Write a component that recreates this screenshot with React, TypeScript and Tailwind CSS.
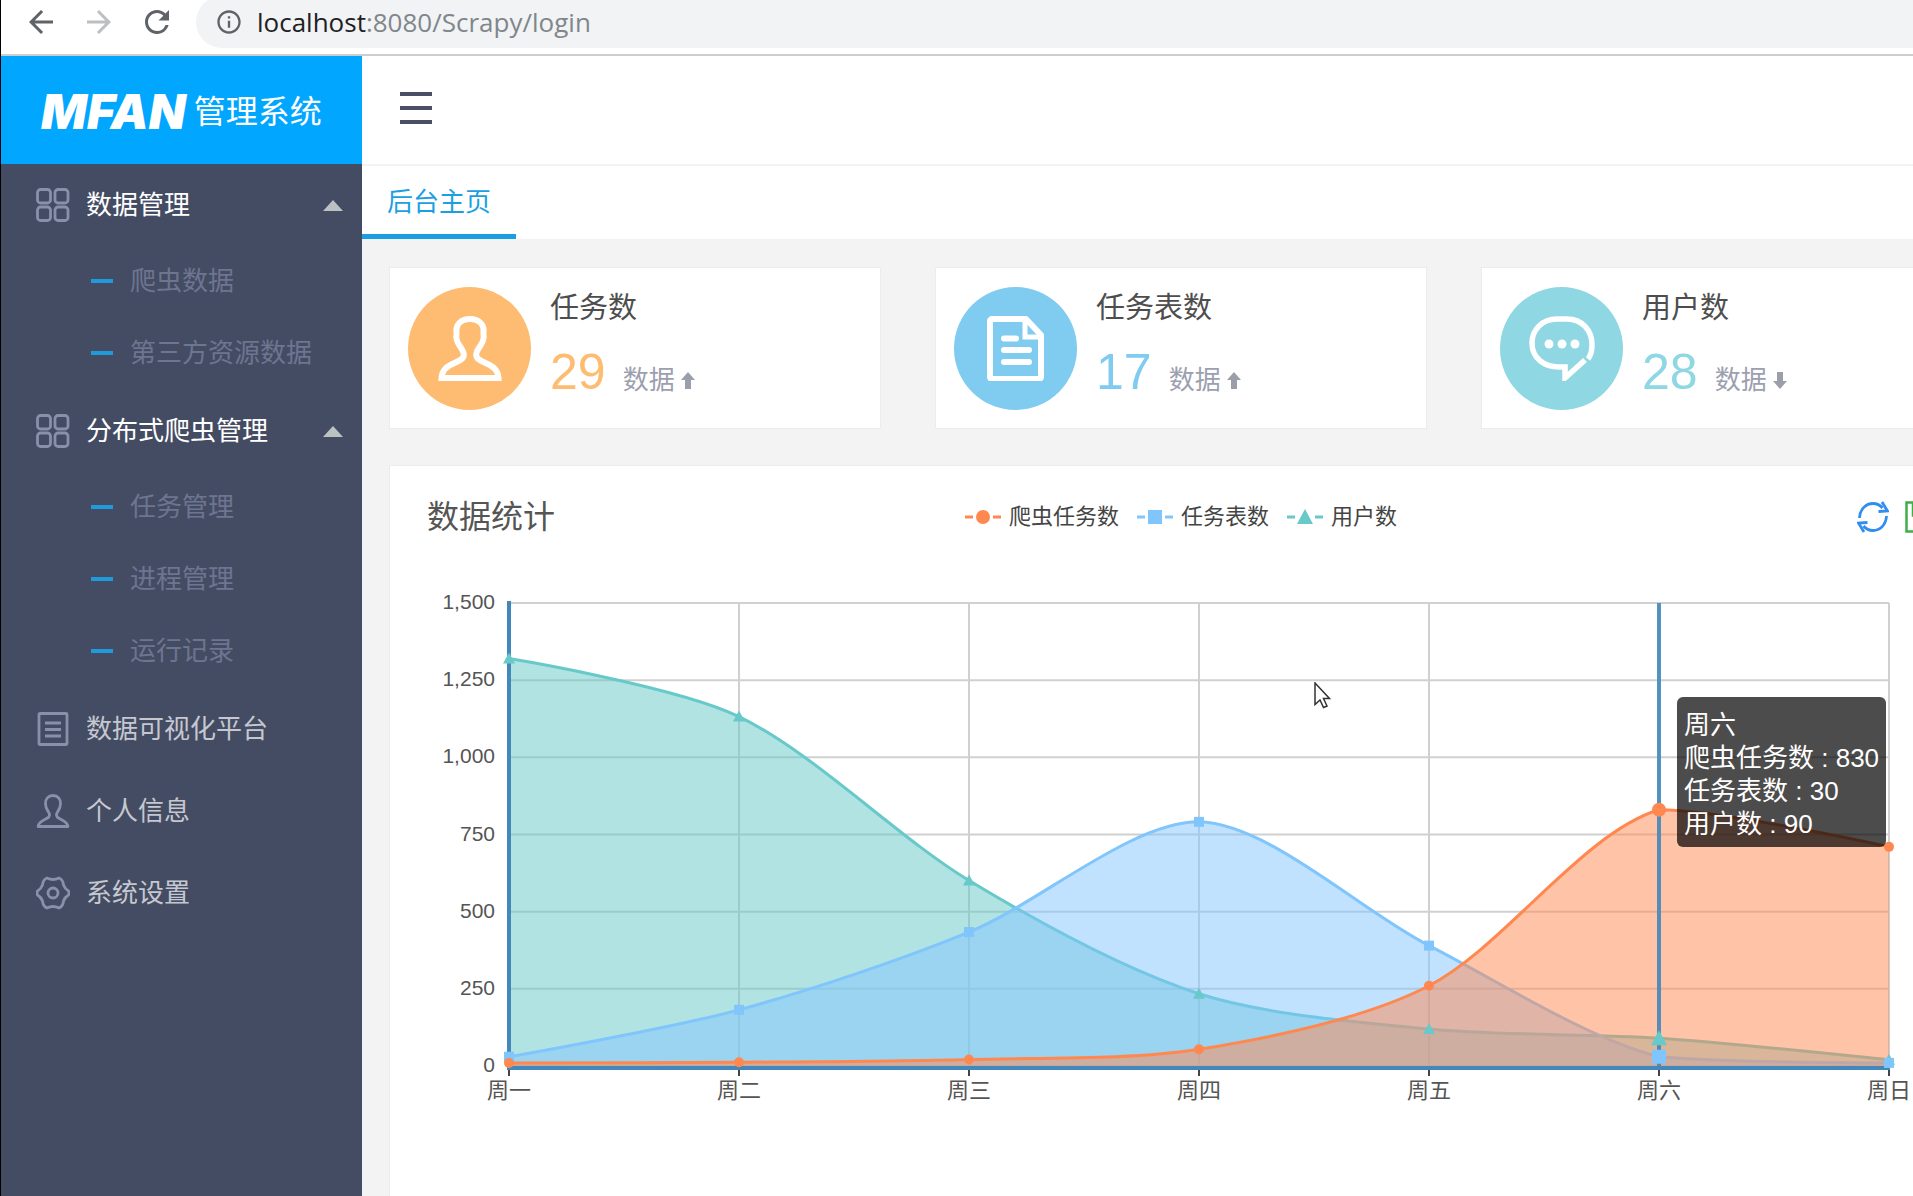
import { MdArrowBack, MdArrowForward, MdInfoOutline, MdRefresh } from "react-icons/md";

const days = ["周一", "周二", "周三", "周四", "周五", "周六", "周日"];

const series = [
  { name: "用户数", color: "#67c9c9", fill: "#66c7c7", shape: "triangle", data: [1320, 1132, 601, 234, 120, 90, 20] },
  { name: "任务表数", color: "#80c5fb", fill: "#82c5ff", shape: "square", data: [30, 182, 434, 791, 390, 30, 10] },
  { name: "爬虫任务数", color: "#ff8850", fill: "#ff8850", shape: "circle", data: [10, 12, 21, 54, 260, 830, 710] },
];

const menu = [
  { label: "数据管理", icon: "grid", children: ["爬虫数据", "第三方资源数据"] },
  { label: "分布式爬虫管理", icon: "grid", children: ["任务管理", "进程管理", "运行记录"] },
  { label: "数据可视化平台", icon: "list", children: [] },
  { label: "个人信息", icon: "user", children: [] },
  { label: "系统设置", icon: "gear", children: [] },
];

const stats = [
  { title: "任务数", value: 29, up: true, icon: "user", bg: "bg-[#fdbc71]", text: "text-[#fdbc71]" },
  { title: "任务表数", value: 17, up: true, icon: "file", bg: "bg-[#80cbf0]", text: "text-[#80cbf0]" },
  { title: "用户数", value: 28, up: false, icon: "chat", bg: "bg-[#8fd7e3]", text: "text-[#8fd7e3]" },
];

function MenuIcon({ name }: { name: string }) {
  return (
    <svg viewBox="0 0 34 34" className="size-[34px] shrink-0" fill="none" stroke="#8890aa" strokeWidth="2.8" strokeLinejoin="round">
      {name === "grid" && (
        <>
          <rect x="1.5" y="1.5" width="13" height="13.5" rx="3" />
          <rect x="19" y="1.5" width="13" height="13.5" rx="3" />
          <rect x="1.5" y="19" width="13" height="13.5" rx="3" />
          <rect x="19" y="19" width="13" height="13.5" rx="3" />
        </>
      )}
      {name === "list" && (
        <>
          <rect x="3" y="1.5" width="28" height="31" rx="1" />
          <path d="M9 11h16M9 17.500h16M9 24h16" />
        </>
      )}
      {name === "user" && (
        <path d="M17 1.500c-5 0-7.500 3.500-7.500 8 0 4.500 1.500 6 3 8.500 1.500 2.500 1.500 4.500-1 6-3.500 2-9 3.500-9.500 8.500h30c-.5-5-6-6.500-9.500-8.500-2.500-1.500-2.500-3.500-1-6 1.500-2.500 3-4 3-8.500 0-4.500-2.500-8-7.500-8z" />
      )}
      {name === "gear" && (
        <>
          <path d="M11 2Q17 5 23 2Q27 3.500 27.500 9Q29 13 32.500 15Q33.500 17 32.500 19Q29 21 27.500 25Q27 30.500 23 32Q17 29 11 32Q7 30.500 6.500 25Q5 21 1.500 19Q.5 17 1.500 15Q5 13 6.500 9Q7 3.500 11 2z" />
          <circle cx="17" cy="17" r="5" />
        </>
      )}
    </svg>
  );
}

function StatIcon({ name }: { name: string }) {
  return (
    <svg viewBox="0 0 66 66" className="size-[66px]" fill="none" stroke="#fff" strokeWidth="6">
      {name === "user" && (
        <path d="M33 4c-9.500 0-14.500 6-13.500 14 .3 2-.7 3 0 5.500.5 4 1.500 5 4 8.500 3.500 5 5 9.500.5 12.500C17 49.500 5 50.500 4.500 63h57C61 50.500 49 49.500 42 44.500c-4.500-3-3-7.500.5-12.500 2.500-3.500 3.500-4.500 4-8.500.7-2.500-.3-3.500 0-5.500C47.500 10 42.500 4 33 4z" />
      )}
      {name === "file" && (
        <>
          <path d="M9 4h34l15 16v42a2 2 0 0 1-2 2H9a2 2 0 0 1-2-2V6a2 2 0 0 1 2-2z" strokeLinejoin="round" />
          <path d="M42 5v17h14" strokeWidth="5" />
          <path d="M21 23.500h12M21 35h25M21 47h25" strokeLinecap="round" />
        </>
      )}
      {name === "chat" && (
        <>
          <path d="M59 44c3-4 4-9 4-14C63 15 53 4 38 4H28C13 4 3 15 3 28c0 15 12 24 27 24h6v11l20-18" strokeWidth="5.500" />
          <g fill="#fff" stroke="none">
            <circle cx="20" cy="29" r="4.500" />
            <circle cx="33" cy="29" r="4.500" />
            <circle cx="46" cy="29" r="4.500" />
          </g>
        </>
      )}
    </svg>
  );
}

function Marker({ shape, color, x, y, r }: { shape: string; color: string; x: number; y: number; r: number }) {
  if (shape === "circle") return <circle cx={x} cy={y} r={r} fill={color} />;
  if (shape === "square") return <rect x={x - r} y={y - r} width={r * 2} height={r * 2} fill={color} />;
  return <path d={`M${x} ${y - r - 1}L${x + r + 1} ${y + r}H${x - r - 1}z`} fill={color} />;
}

// plot area inside the chart svg
const LEFT = 119;
const TOP = 44;
const BOTTOM = 507;
const STEP = 230;
const RIGHT = LEFT + STEP * 6;

const px = (i: number) => LEFT + i * STEP;
const py = (v: number) => BOTTOM - (v / 1500) * (BOTTOM - TOP);

// bezier through every point, control points clamped to the data range
function smoothPath(data: number[]) {
  const smooth = 0.3;
  const pts = data.map((v, i) => [px(i), py(v)]);
  const lo = Math.min(...pts.map((p) => p[1]));
  const hi = Math.max(...pts.map((p) => p[1]));
  const clamp = (y: number) => Math.max(lo, Math.min(hi, y));
  const ctrl = pts.map((p, i) => {
    if (i === 0 || i === pts.length - 1) return [p, p];
    const a = pts[i - 1];
    const b = pts[i + 1];
    const d0 = Math.hypot(p[0] - a[0], p[1] - a[1]);
    const d1 = Math.hypot(p[0] - b[0], p[1] - b[1]);
    const vx = (b[0] - a[0]) * smooth;
    const vy = (b[1] - a[1]) * smooth;
    const k0 = d0 / (d0 + d1);
    const k1 = d1 / (d0 + d1);
    return [
      [p[0] - vx * k0, clamp(p[1] - vy * k0)],
      [p[0] + vx * k1, clamp(p[1] + vy * k1)],
    ];
  });
  let d = `M${pts[0][0]} ${pts[0][1]}`;
  for (let i = 1; i < pts.length; i++) {
    d += `C${ctrl[i - 1][1].join(" ")} ${ctrl[i][0].join(" ")} ${pts[i].join(" ")}`;
  }
  return d;
}

function Chart() {
  return (
    <svg width="1580" height="560" viewBox="0 0 1580 560" className="block" role="img" aria-label="数据统计">
      <g stroke="#d0d0d0" strokeWidth="2">
        {[0, 250, 500, 750, 1000, 1250, 1500].map((v) => (
          <line key={v} x1={LEFT} x2={RIGHT} y1={py(v)} y2={py(v)} />
        ))}
        {days.map((d, i) => (
          <line key={d} x1={px(i)} x2={px(i)} y1={TOP} y2={BOTTOM} />
        ))}
      </g>
      {series.map((s) => (
        <g key={s.name}>
          <path d={`${smoothPath(s.data)}V${BOTTOM}H${LEFT}z`} fill={s.fill} fillOpacity="0.5" />
          <path d={smoothPath(s.data)} fill="none" stroke={s.color} strokeWidth="3" />
        </g>
      ))}
      <path d={`M${LEFT} ${TOP - 2}V${BOTTOM + 1}`} stroke="#4488bb" strokeWidth="4" />
      <path d={`M${px(5)} ${TOP}V${BOTTOM}`} stroke="#4488bb" strokeWidth="4" strokeOpacity="0.9" />
      <path d={`M${LEFT - 2} ${BOTTOM + 2}H${RIGHT + 1}`} stroke="#4488bb" strokeWidth="4" />
      {series.map((s) => (
        <g key={s.name}>
          {s.data.map((v, i) => (
            <Marker key={i} shape={s.shape} color={s.color} x={px(i)} y={py(v)} r={i === 5 ? 7 : 5} />
          ))}
        </g>
      ))}
      <g fill="#555" fontSize="21" textAnchor="end">
        {[0, 250, 500, 750, 1000, 1250, 1500].map((v) => (
          <text key={v} x={LEFT - 14} y={py(v) + 6}>
            {v.toLocaleString("en-US")}
          </text>
        ))}
      </g>
      <g fill="#555" fontSize="22" textAnchor="middle">
        {days.map((d, i) => (
          <g key={d}>
            <path d={`M${px(i)} ${BOTTOM + 4}v6`} stroke="#444" strokeWidth="2" />
            <text x={px(i)} y={BOTTOM + 32}>
              {d}
            </text>
          </g>
        ))}
      </g>
    </svg>
  );
}

function Sidebar() {
  return (
    <aside className="w-[361px] shrink-0 bg-[#444c63]">
      <a href="#" className="flex h-[108px] items-center gap-2 bg-[#01a6ff] pt-1 pl-10 text-white">
        <span className="font-[Inter,sans-serif] text-[48px] leading-none font-black italic">MFAN</span>
        <span className="text-[32px] leading-none">管理系统</span>
      </a>
      <nav>
        {menu.map((item) => (
          <div key={item.label}>
            {item.children.length > 0 ? (
              <button className="flex h-[82px] w-full items-center gap-4 pr-[19px] pl-[35px] text-[26px] text-white">
                <MenuIcon name={item.icon} />
                {item.label}
                <svg viewBox="0 0 20 11" className="ml-auto h-[11px] w-5" fill="#bcc2c4">
                  <path d="M10 0L20 11H0z" />
                </svg>
              </button>
            ) : (
              <a href="#" className="flex h-[82px] items-center gap-4 pl-[35px] text-[26px] text-[#c5c8d0]">
                <MenuIcon name={item.icon} />
                {item.label}
              </a>
            )}
            {item.children.map((child) => (
              <a key={child} href="#" className="flex h-[72px] items-center gap-[17px] pb-0.5 pl-[90px] text-[26px] text-[#6d7590]">
                <span className="h-1 w-[22px] bg-[#1f9bdb]" />
                {child}
              </a>
            ))}
          </div>
        ))}
      </nav>
    </aside>
  );
}

export default function App() {
  return (
    <div className="flex h-screen flex-col overflow-hidden border-l border-black bg-white font-['Liberation_Sans','Noto_Sans_CJK_SC',sans-serif]">
      <div className="flex h-14 shrink-0 items-start border-b-2 border-[#cdcdcd] pl-[22px]">
        <div className="flex h-11 items-center gap-[22px] text-[#5f6368]">
          <button aria-label="后退">
            <MdArrowBack size={36} />
          </button>
          <button aria-label="前进" className="text-[#bdbfc1]">
            <MdArrowForward size={36} />
          </button>
          <button aria-label="刷新页面">
            <MdRefresh size={36} />
          </button>
        </div>
        <div className="-mt-1 ml-[21px] flex h-[52px] flex-1 items-center gap-3.5 rounded-l-full bg-[#f1f3f4] pl-[19px] font-['Open_Sans',sans-serif] text-[26px] text-[#80868b]">
          <MdInfoOutline size={28} className="text-[#5f6368]" />
          <span>
            <span className="text-[#202124]">localhost</span>:8080/Scrapy/login
          </span>
        </div>
      </div>

      <div className="flex min-h-0 flex-1">
        <Sidebar />
        <main className="flex min-w-0 flex-1 flex-col overflow-hidden bg-[#f3f3f3]">
          <header className="flex h-[110px] shrink-0 items-center border-b-2 border-[#f3f3f3] bg-white pb-1 pl-[38px]">
            <button aria-label="菜单" className="flex flex-col gap-2.5">
              <span className="h-1 w-8 bg-[#4b4f66]" />
              <span className="h-1 w-8 bg-[#4b4f66]" />
              <span className="h-1 w-8 bg-[#4b4f66]" />
            </button>
          </header>
          <div className="flex h-[73px] shrink-0 bg-white">
            <a href="#" className="flex items-center border-b-[5px] border-[#1b9fe2] px-[25px] pt-1 text-[26px] text-[#1b9fe2]">
              后台主页
            </a>
          </div>

          <div className="flex min-w-[1610px] flex-1 flex-col pt-[28px] pl-[27px]">
            <div className="grid w-[1584px] grid-cols-3 gap-[54px]">
              {stats.map((s) => (
                <section key={s.title} className="flex h-[162px] items-center gap-[19px] border border-[#ececec] bg-white pl-[18px]">
                  <div className={`flex size-[123px] items-center justify-center rounded-full ${s.bg}`}>
                    <StatIcon name={s.icon} />
                  </div>
                  <div className="pt-1.5">
                    <h3 className="text-[29px] leading-[44px] text-[#4d4d4d]">{s.title}</h3>
                    <p className="mt-1.5 flex items-baseline gap-[17px] leading-[72px]">
                      <span className={`text-[50px] ${s.text}`}>{s.value}</span>
                      <span className="flex items-center gap-1.5 text-[26px] text-[#9c9faf]">
                        数据
                        <svg viewBox="0 0 14 17" className={`h-[17px] w-3.5 ${s.up ? "" : "rotate-180"}`} fill="#9b9fa9">
                          <path d="M7 0L14 8H10V17H4V8H0z" />
                        </svg>
                      </span>
                    </p>
                  </div>
                </section>
              ))}
            </div>

            <section className="relative mt-9 w-[1584px] flex-1 border border-b-0 border-[#ececec] bg-white">
              <div className="grid h-[93px] grid-cols-[1fr_auto_1fr] items-center pt-2 pr-[37px] pl-[37px]">
                <h2 className="text-[32px] text-[#555]">数据统计</h2>
                <ul className="flex gap-[18px] text-[22px] text-[#444]">
                  {[...series].reverse().map((s) => (
                    <li key={s.name} className="flex items-center gap-2">
                      <svg viewBox="0 0 36 18" className="h-[18px] w-9">
                        <path d="M0 9h8M28 9h8" stroke={s.color} strokeWidth="3" />
                        <Marker shape={s.shape} color={s.color} x={18} y={9} r={7} />
                      </svg>
                      {s.name}
                    </li>
                  ))}
                </ul>
                <div className="flex justify-end gap-4">
                  <button aria-label="刷新">
                    <svg viewBox="0 0 32 32" className="size-8" fill="none" stroke="#2f8ef0" strokeWidth="2.8">
                      <path d="M2.500 17C3 8 9 2.500 16 2.500c4 0 7 1.500 9.500 4.500M29.500 15C29 24 23 29.500 16 29.500c-4 0-7-1.500-9.500-4.500" />
                      <path d="M25 1l5.500 9-9 .5M7 31L1.500 22l9-.5" />
                    </svg>
                  </button>
                  <button aria-label="保存">
                    <svg viewBox="0 0 30 32" className="h-8 w-[30px]" fill="none" stroke="#3fae49" strokeWidth="2.5">
                      <path d="M1.500 1.500h27v29h-27zM8 1.500v13h14v-13" />
                    </svg>
                  </button>
                </div>
              </div>
              <Chart />
              <div className="absolute top-[231px] left-[1287px] rounded-md bg-black/70 px-[7px] pt-3 pb-1.5 text-[26px] leading-[33px] text-white">
                <p>周六</p>
                <p>爬虫任务数 : 830</p>
                <p>任务表数 : 30</p>
                <p>用户数 : 90</p>
              </div>
              <svg viewBox="0 0 17 27" className="absolute top-[216px] left-[924px] h-[27px] w-[17px]" fill="#fff" stroke="#333" strokeWidth="1.500">
                <path d="M1 1v21.500l5-4.500 3.500 7.500 3.500-1.500-3.500-7.500h6z" />
              </svg>
            </section>
          </div>
        </main>
      </div>
    </div>
  );
}
